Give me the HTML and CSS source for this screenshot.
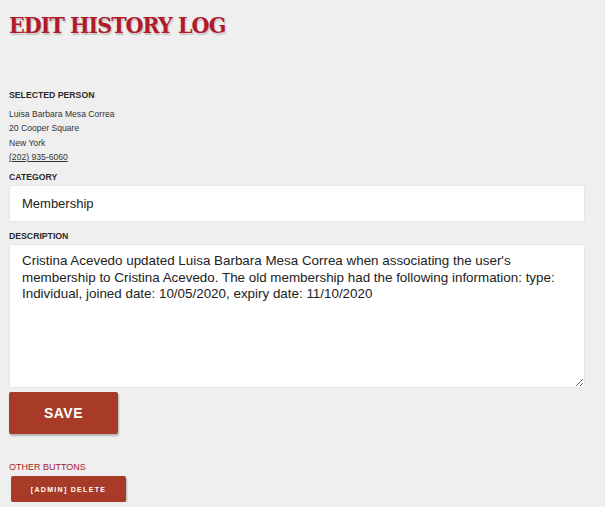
FILE: index.html
```html
<!DOCTYPE html>
<html lang="en">
<head>
    <meta charset="UTF-8">
    <title>Edit History Log</title>
    <link rel="stylesheet" href="styles.css">
</head>
<body>
    <h1 class="page-title">Edit History Log</h1>

    <div class="section person">
        <div class="label">Selected Person</div>
        <div class="person-info">
            <div>Luisa Barbara Mesa Correa</div>
            <div>20 Cooper Square</div>
            <div>New York</div>
            <div><a href="#">(202) 935-6060</a></div>
        </div>
    </div>

    <div class="section">
        <div class="label">Category</div>
        <input class="field" type="text" value="Membership">
    </div>

    <div class="section description">
        <div class="label">Description</div>
        <textarea class="field area">Cristina Acevedo updated Luisa Barbara Mesa Correa when associating the user's membership to Cristina Acevedo. The old membership had the following information: type: Individual, joined date: 10/05/2020, expiry date: 11/10/2020</textarea>
    </div>

    <button class="btn save">Save</button>

    <div class="other">
        <div class="label red">Other Buttons</div>
        <button class="btn small">[Admin] Delete</button>
    </div>
</body>
</html>
```

FILE: styles.css
```css
body {
    margin: 0;
    padding: 0 20px 0 9px;
    background: #efefef;
    font-family: "Liberation Sans", Arial, sans-serif;
    color: #222;
}
.page-title {
    margin: 0;
    padding-top: 11px;
    height: 90px;
    font-family: "DejaVu Serif Condensed", "DejaVu Serif", serif;
    font-stretch: condensed;
    font-weight: bold;
    font-size: 23px;
    letter-spacing: -1px;
    text-transform: uppercase;
    color: #b01a2b;
    text-shadow: 1px 2px 1px #c9c3c3;
    box-sizing: border-box;
}
.label {
    font-size: 8.7px;
    font-weight: bold;
    text-transform: uppercase;
    color: #2a2a2a;
    line-height: 10px;
    margin-bottom: 3px;
}
.label.red {
    font-weight: normal;
    color: #a51b2a;
    font-size: 9px;
    margin-bottom: 4px;
}
.person .label { margin-bottom: 7px; }
.person-info {
    font-size: 8.6px;
    line-height: 14.3px;
    color: #333;
}
.person-info a { color: #333; }
.section { margin-bottom: 9px; }
.person.section { margin-bottom: 8px; }
.section.description { margin-bottom: 4px; }
.field {
    display: block;
    width: 100%;
    box-sizing: border-box;
    height: 37px;
    margin: 0;
    border: 1px solid #e6e6e6;
    border-radius: 2px;
    background: #fff;
    padding: 0 12px;
    font-family: "Liberation Sans", Arial, sans-serif;
    font-size: 13px;
    color: #222;
    outline: none;
}
.area {
    height: 144px;
    padding: 8px 12px;
    font-size: 13.4px;
    line-height: 16.5px;
    resize: vertical;
}
.btn {
    display: block;
    border: none;
    border-radius: 2px;
    background: #a83a28;
    color: #fff;
    font-family: "Liberation Sans", Arial, sans-serif;
    font-weight: bold;
    text-transform: uppercase;
    box-shadow: 1px 2px 2px rgba(0, 0, 0, 0.25);
}
.save {
    width: 109px;
    height: 42px;
    font-size: 14px;
    letter-spacing: 0.5px;
}
.other { margin-top: 28px; }
.small {
    margin-left: 2px;
    width: 115px;
    height: 26px;
    font-size: 7px;
    letter-spacing: 1.3px;
}
```
